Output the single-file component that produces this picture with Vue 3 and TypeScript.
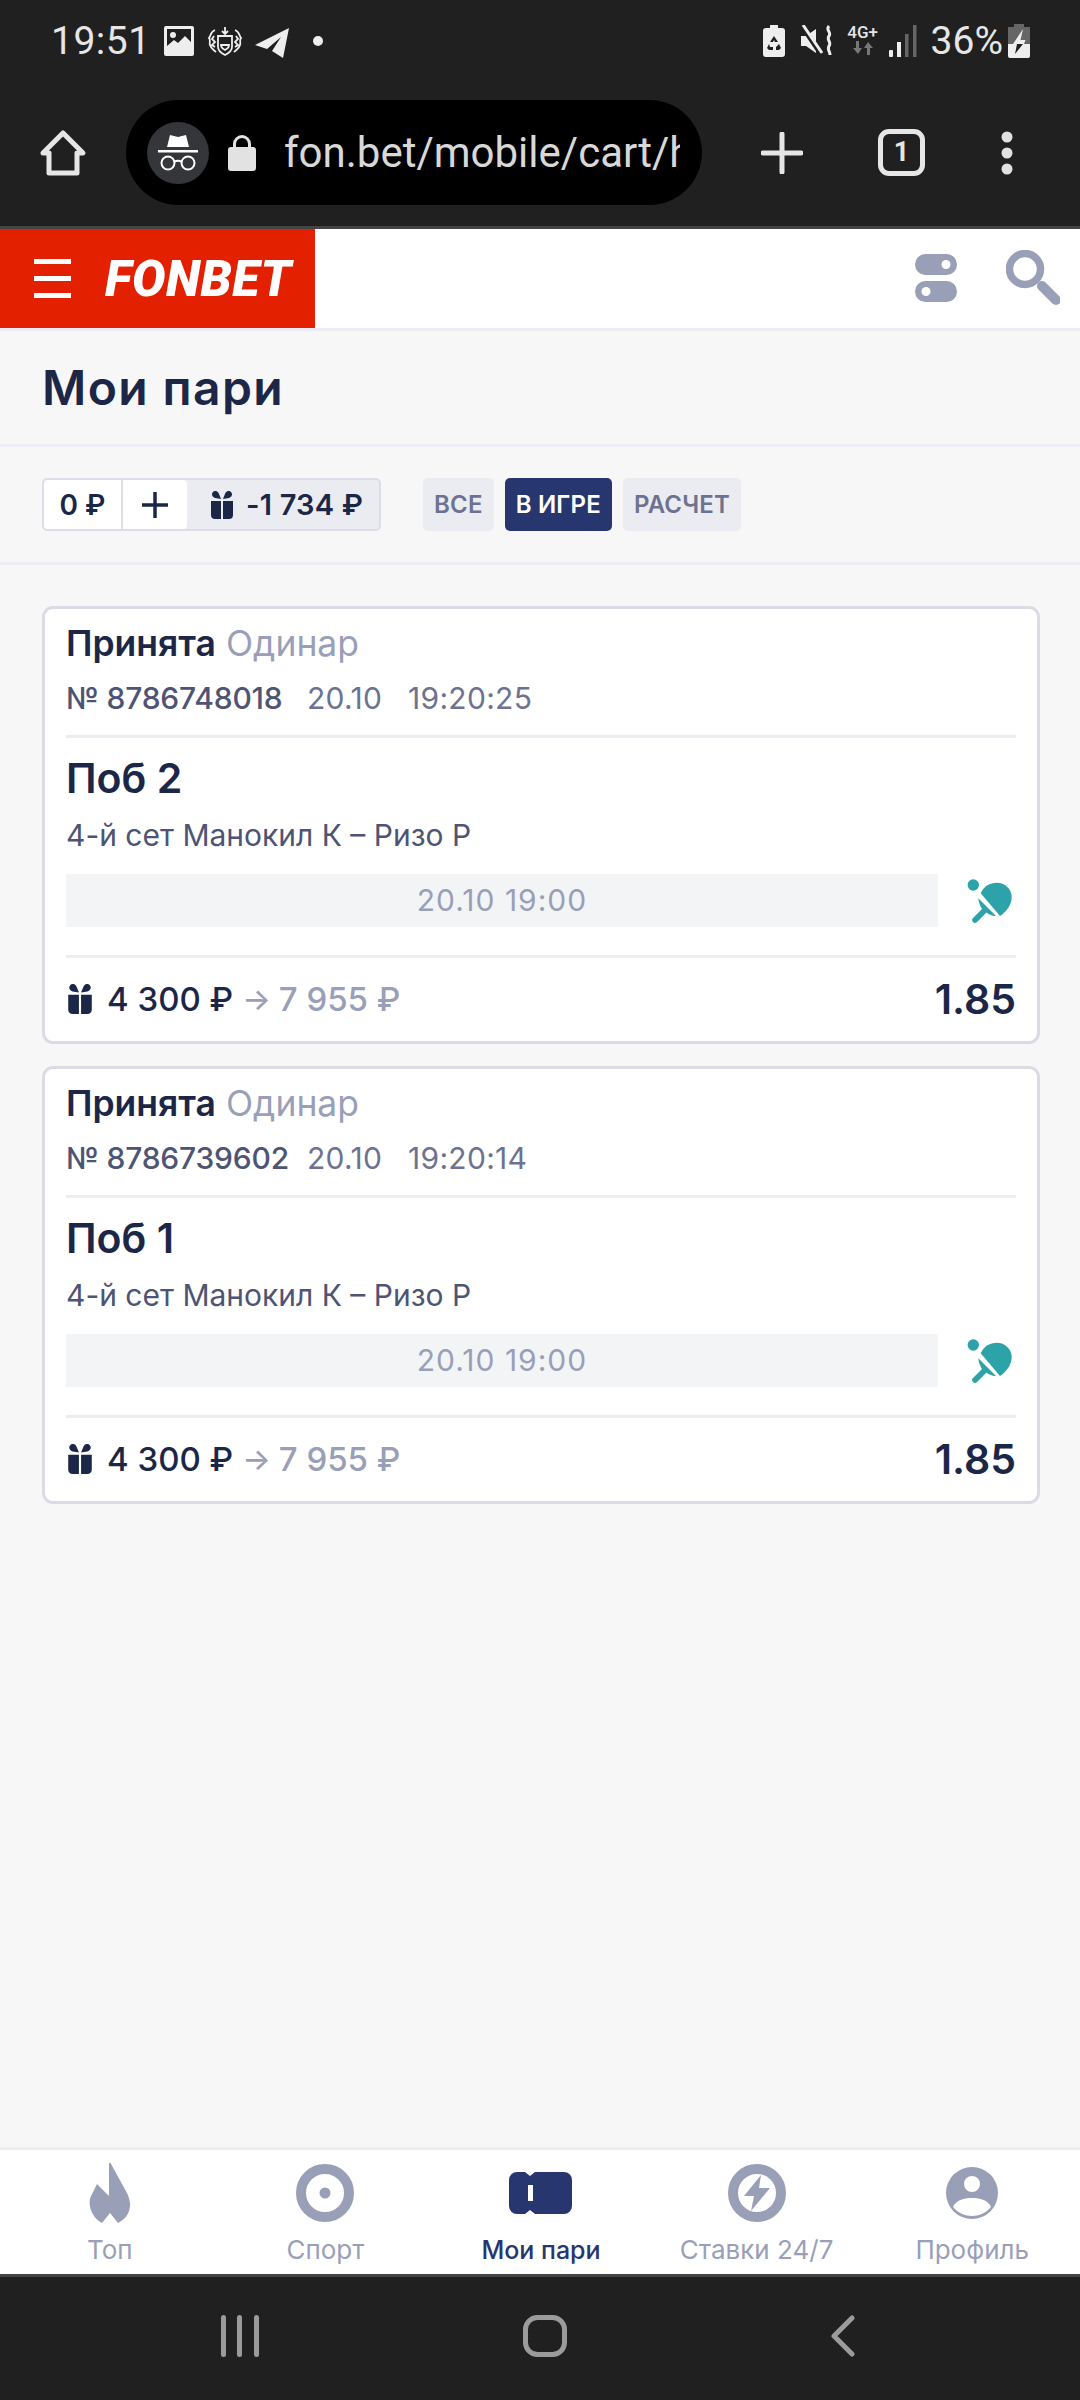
<template>
  <div class="screen">
    <div class="chrome">
      <div class="status">
        <span class="time">19:51</span>
        <svg class="st-img" viewBox="0 0 30 30"><path fill="#eee" fill-rule="evenodd" d="M2 0h26a2 2 0 0 1 2 2v26a2 2 0 0 1-2 2H2a2 2 0 0 1-2-2V2a2 2 0 0 1 2-2zM3 3v17l7-6 4 3 7-7 6 6V3zM9 6a3 3 0 1 1 0 6 3 3 0 0 1 0-6z" /></svg>
        <svg class="st-fon" viewBox="0 0 36 32" fill="none" stroke="#eee" stroke-width="1.8"><path d="M18 1v6M15 5l3 3 3-3M11 10h14v11c0 4-3 6-7 8-4-2-7-4-7-8zM14 19c0 3 2 4 4 5 2-1 4-2 4-5z" /><path d="M8 4C3 6 4 10 2 12c2 2 0 4 1 7 1 4 4 5 6 7M28 4c5 2 4 6 6 8-2 2 0 4-1 7-1 4-4 5-6 7M7 10l-2 3 3 3-3 3 3 2M29 10l2 3-3 3 3 3-3 2" /></svg>
        <svg class="st-tg" viewBox="0 0 34 32"><path fill="#eee" d="M34 1 28 31 17 24l9-14-14 12L0 18z" /></svg>
        <span class="st-dot"></span>
        <span class="status-gap"></span>
        <svg class="st-bat" viewBox="0 0 22 32"><path fill="#eee" fill-rule="evenodd" d="M7 0h8v3h4a3 3 0 0 1 3 3v23a3 3 0 0 1-3 3H3a3 3 0 0 1-3-3V6a3 3 0 0 1 3-3h4zM11 11l-4 6h3l1-2 1 2h3zM6 19l-2 4 2 2h4v-3H7zM16 19l-3 3v3h3l2-2z" /></svg>
        <svg class="st-mute" viewBox="0 0 32 32"><path fill="#eee" d="M0 11h5L15 4v24L5 21H0z" /><path d="M1 1l19 28" stroke="#202020" stroke-width="5" /><path d="M2 0l19 28" stroke="#eee" stroke-width="3" /><path d="M28 1c-4 4 3 6 0 10-3 4 3 6 0 10-2 4 1 5 1 9" fill="none" stroke="#eee" stroke-width="3" /></svg>
        <div class="st-net">
          <span>4G+</span>
          <svg viewBox="0 0 24 14"><path fill="#777" d="M5 0h3v7h3l-4 6-5-6h3zM17 1l5 6h-3v7h-3V7h-3z" /></svg>
        </div>
        <svg class="st-sig" viewBox="0 0 28 32"><rect y="25" width="4" height="7" rx="1" fill="#eee" /><rect x="8" y="17" width="4" height="15" fill="#eee" /><rect x="16" y="9" width="3.5" height="23" fill="#666" /><rect x="24" y="0" width="3.5" height="32" fill="#666" /></svg>
        <span class="pct">36%</span>
        <svg class="st-charge" viewBox="0 0 22 34">
          <path fill="#666" d="M6 0h10v3h6v17H0V3h6z" />
          <path fill="#eee" d="M0 20h22v12a2 2 0 0 1-2 2H2a2 2 0 0 1-2-2z" />
          <path fill="#eee" d="M15 5 5 20h11l1.500-4h-5z" />
          <path fill="#202020" d="M9 20 7 30l8-10z" />
        </svg>
      </div>
      <div class="toolbar">
        <svg class="home" viewBox="0 0 48 48" fill="none" stroke="#e6e6e6" stroke-width="5" stroke-linejoin="round"><path d="M4 24 24 4l20 20h-6v20H10V24z" /></svg>
        <div class="urlbar">
          <span class="incognito">
            <svg viewBox="0 0 42 38" fill="#fff"><path d="M10 13 13 1l8 2 8-2 3 12z" /><rect x="1" y="16" width="40" height="2.5" /><g fill="none" stroke="#fff" stroke-width="2"><circle cx="11" cy="29" r="6.5" /><circle cx="31" cy="29" r="6.5" /><path d="M17 28c2.500-1.500 5.500-1.500 8 0" /></g></svg>
          </span>
          <svg class="lock" viewBox="0 0 28 37"><path fill="#e2e2e2" fill-rule="evenodd" d="M5 13V10a9 9 0 0 1 18 0v3h2a3 3 0 0 1 3 3v18a3 3 0 0 1-3 3H3a3 3 0 0 1-3-3V16a3 3 0 0 1 3-3zM8 13h12V10a6 6 0 0 0-12 0z" /></svg>
          <span class="url">fon.bet/mobile/cart/history</span>
        </div>
        <svg class="plus" viewBox="0 0 42 42"><path d="M21 2v38M2 21h38" stroke="#e6e6e6" stroke-width="5" stroke-linecap="round" /></svg>
        <span class="tabcount">1</span>
        <svg class="dots" viewBox="0 0 12 44" fill="#e2e2e2"><circle cx="6" cy="6" r="5.500" /><circle cx="6" cy="22" r="5.500" /><circle cx="6" cy="38" r="5.500" /></svg>
      </div>
    </div>

    <header class="top">
      <div class="brand">
        <div class="burger"><i></i><i></i><i></i></div>
        <span class="logo">FONBET</span>
      </div>
      <svg class="toggles" viewBox="0 0 42 48">
        <rect width="42" height="21" rx="10.500" fill="#9a9fb8" />
        <circle cx="31" cy="10.500" r="4.500" fill="#fff" />
        <rect y="27" width="42" height="21" rx="10.500" fill="#9a9fb8" />
        <circle cx="11" cy="37.500" r="4.500" fill="#fff" />
      </svg>
      <svg class="search" viewBox="0 0 54 56" fill="none" stroke="#9a9fb8"><circle cx="19" cy="19" r="15.500" stroke-width="7.500" /><path d="M36 36l14 14" stroke-width="10" stroke-linecap="round" /></svg>
    </header>

    <main class="content">
      <h1 class="title">Мои пари</h1>
      <div class="filters">
        <div class="balance">
          <div class="bal-white">
            <span class="bal-sum">0 ₽</span>
            <span class="bal-add">
              <svg viewBox="0 0 26 26"><path d="M13 0v26M0 13h26" stroke="#1c2647" stroke-width="3.500" /></svg>
            </span>
          </div>
          <div class="bal-bonus">
            <svg class="gift" viewBox="0 0 26 28"><use href="#gift-shape" /></svg>
            <span>-1 734 ₽</span>
          </div>
        </div>
        <button
          v-for="f in filters"
          :key="f"
          :class="['chip', { active: f === 'В ИГРЕ' }]"
        >{{ f }}</button>
      </div>

      <section class="bets">
        <article v-for="bet in bets" :key="bet.id" class="bet">
          <div class="bet-head">
            <div class="bet-state"><b>Принята</b> <span>Одинар</span></div>
            <div class="bet-meta">
              <span class="num">№ {{ bet.id }}</span>
              <span class="date">20.10</span>
              <span>{{ bet.time }}</span>
            </div>
          </div>
          <div class="bet-body">
            <div class="bet-pick">{{ bet.pick }}</div>
            <div class="bet-event">4-й сет Манокил К – Ризо Р</div>
            <div class="bet-when">
              <div class="when-bar">20.10 19:00</div>
              <svg class="paddle" viewBox="0 0 50 50" fill="#2ba3a8">
                <circle cx="11.300" cy="9" r="5.700" />
                <path d="M18.700 17.300C22 10 28 6.700 34.700 6.700 43 6.700 49.700 13 49.700 21 49.700 28 45 35.500 38 40z" />
                <path d="M16.300 22.300 34 40C30 40 26 38 24.500 36.500L15 46Q13 48 11 46 9 44 11 42L20 33C18 30 16.500 26 16.300 22.300z" />
              </svg>
            </div>
          </div>
          <div class="bet-foot">
            <svg class="gift small" viewBox="0 0 26 28"><use href="#gift-shape" /></svg>
            <span class="stake">4 300 ₽</span>
            <span class="arrow">→</span>
            <span class="win">7 955 ₽</span>
            <span class="coef">1.85</span>
          </div>
        </article>
      </section>
    </main>

    <nav class="tabbar">
      <div v-for="t in tabs" :key="t.key" :class="['tab', { current: t.key === 'bets' }]">
        <span class="tab-icon">
          <svg v-if="t.key === 'top'" width="42" height="61" viewBox="0 0 42 61" fill="#9a9fb8"><path d="M20 0h1.500L38 30c6 12 3 24-9 30l-8-10-8 10C3 55-2 42 2 33l6-12 12 12z" /></svg>
          <svg v-else-if="t.key === 'sport'" width="58" height="58" viewBox="0 0 58 58"><circle cx="29" cy="29" r="24" fill="none" stroke="#9a9fb8" stroke-width="10" /><circle cx="29" cy="29" r="5.500" fill="#9a9fb8" /></svg>
          <svg v-else-if="t.key === 'bets'" width="63" height="42" viewBox="0 0 63 42"><path fill="#27366f" fill-rule="evenodd" d="M8 0h8l5 4 5-4h29a8 8 0 0 1 8 8v26a8 8 0 0 1-8 8H26l-5-4-5 4H8a8 8 0 0 1-8-8V8a8 8 0 0 1 8-8zM19 13v16h5V13z" /></svg>
          <svg v-else-if="t.key === 'live'" width="58" height="58" viewBox="0 0 58 58"><circle cx="29" cy="29" r="24" fill="none" stroke="#9a9fb8" stroke-width="10" /><path fill="#9a9fb8" d="M33 11 16 32h10l-3 15 19-23H31z" /></svg>
          <svg v-else width="54" height="54" viewBox="0 0 54 54"><circle cx="27" cy="27" r="26" fill="#9a9fb8" /><circle cx="27" cy="18" r="8" fill="#fff" /><path fill="#fff" d="M8 41c3-7 11-9 19-9s16 2 19 9c-5 6-12 9-19 9S13 47 8 41z" /></svg>
        </span>
        <span class="tab-label">{{ t.label }}</span>
      </div>
    </nav>

    <div class="sysnav">
      <svg width="38" height="42" viewBox="0 0 38 42" fill="#9b9b9b"><rect x="0" width="5" height="42" rx="2.500" /><rect x="16" width="5" height="42" rx="2.500" /><rect x="33" width="5" height="42" rx="2.500" /></svg>
      <svg width="44" height="42" viewBox="0 0 44 42" fill="none" stroke="#9b9b9b" stroke-width="5"><rect x="2.500" y="2.500" width="39" height="37" rx="12" /></svg>
      <svg width="26" height="42" viewBox="0 0 26 42" fill="none" stroke="#9b9b9b" stroke-width="5" stroke-linecap="round" stroke-linejoin="round"><path d="M22 3 4 21l18 18" /></svg>
    </div>

    <svg class="defs" width="0" height="0">
      <defs>
        <g id="gift-shape" fill="#1c2647">
          <path d="M2 10h10v18H6a4 4 0 0 1-4-4zM14 10h10v14a4 4 0 0 1-4 4h-6z" />
          <path d="M12 8 6 7C3 6 2 3 4 1s5-1 6 2zM14 8l6-1c3-1 4-4 2-6s-5-1-6 2z" />
        </g>
      </defs>
    </svg>
  </div>
</template>

<script setup lang="ts">
const filters = ['ВСЕ', 'В ИГРЕ', 'РАСЧЕТ'];

const bets = [
  { id: '8786748018', time: '19:20:25', pick: 'Поб 2' },
  { id: '8786739602', time: '19:20:14', pick: 'Поб 1' }
];

const tabs = [
  { key: 'top', label: 'Топ' },
  { key: 'sport', label: 'Спорт' },
  { key: 'bets', label: 'Мои пари' },
  { key: 'live', label: 'Ставки 24/7' },
  { key: 'profile', label: 'Профиль' }
];
</script>

<style>
html, body {
  margin: 0;
  background: #f7f7f8;
}
</style>

<style scoped>
.screen {
  width: 1080px;
  height: 2400px;
  display: flex;
  flex-direction: column;
  font-family: Inter, "Noto Sans", sans-serif;
  color: #1c2647;
  background: #f7f7f8;
  overflow: hidden;
}

.chrome {
  height: 229px;
  box-sizing: border-box;
  flex: none;
  background: #202020;
  border-bottom: 3px solid #444;
  font-family: Roboto, sans-serif;
  color: #e6e6e6;
}

.status {
  height: 100px;
  box-sizing: border-box;
  padding: 24px 50px 0 51px;
  display: flex;
  align-items: flex-start;
}

.time {
  font-size: 39px;
  line-height: 34px;
  width: 113px;
  letter-spacing: 0.5px;
}

.st-img { width: 30px; height: 30px; margin-top: 2px; margin-right: 13px; }
.st-fon { width: 36px; height: 32px; margin-top: 2px; margin-right: 12px; }
.st-tg { width: 34px; height: 32px; margin-top: 3px; margin-right: 24px; }
.st-dot { width: 10px; height: 10px; border-radius: 50%; background: #eee; margin-top: 12px; }
.status-gap { flex: 1; }
.st-bat { width: 22px; height: 32px; margin-top: 1px; margin-right: 16px; }
.st-mute { width: 32px; height: 32px; margin-top: 1px; margin-right: 14px; }
.st-net { width: 32px; margin-right: 10px; display: flex; flex-direction: column; align-items: center; }
.st-net span { font-size: 17px; line-height: 17px; font-weight: 500; white-space: nowrap; }
.st-net svg { width: 24px; height: 14px; }
.st-sig { width: 28px; height: 32px; margin-top: 1px; margin-right: 14px; }
.pct { font-size: 39px; line-height: 34px; margin-right: 5px; }
.st-charge { width: 22px; height: 34px; }

.toolbar {
  height: 105px;
  display: flex;
  align-items: center;
}

.home { width: 48px; height: 48px; margin-left: 39px; margin-right: 39px; }

.urlbar {
  width: 576px;
  height: 105px;
  box-sizing: border-box;
  padding: 0 22px 0 21px;
  background: #000;
  border-radius: 53px;
  display: flex;
  align-items: center;
  overflow: hidden;
}

.incognito {
  flex: none;
  width: 62px;
  height: 62px;
  border-radius: 50%;
  background: #35363a;
  display: flex;
  align-items: center;
  justify-content: center;
}

.incognito svg { width: 42px; height: 38px; }
.lock { flex: none; width: 28px; height: 37px; margin-left: 19px; }

.url {
  margin-left: 28px;
  font-size: 42px;
  color: #d8d8d8;
  white-space: nowrap;
  overflow: hidden;
}

.plus { width: 42px; height: 42px; margin-left: 59px; }

.tabcount {
  width: 47px;
  height: 47px;
  box-sizing: border-box;
  margin-left: 75px;
  border: 5px solid #e6e6e6;
  border-radius: 11px;
  font-size: 27px;
  font-weight: 700;
  line-height: 37px;
  text-align: center;
}

.dots { width: 12px; height: 44px; margin-left: 76px; }

.top {
  height: 102px;
  box-sizing: border-box;
  flex: none;
  background: #fff;
  border-bottom: 3px solid #ecedf2;
  display: flex;
  align-items: flex-start;
}

.brand {
  width: 315px;
  height: 99px;
  box-sizing: border-box;
  padding-left: 34px;
  background: #e32000;
  display: flex;
  align-items: center;
  gap: 34px;
  margin-right: 600px;
}

.burger { width: 37px; display: flex; flex-direction: column; gap: 12px; }
.burger i { display: block; height: 5px; background: #fff; }

.logo {
  font-family: Roboto, sans-serif;
  font-size: 50px;
  font-weight: 900;
  font-style: italic;
  color: #fff;
  line-height: 1;
  letter-spacing: 0.5px;
}

.toggles { width: 42px; height: 48px; margin-top: 25px; }
.search { width: 54px; height: 56px; margin-top: 21px; margin-left: 49px; }

.content {
  flex: 1;
  min-height: 0;
}

.title {
  margin: 0;
  height: 116px;
  box-sizing: border-box;
  border-bottom: 3px solid #ecedf2;
  padding: 0 42px;
  display: flex;
  align-items: center;
  font-size: 48px;
  font-weight: 600;
  letter-spacing: 1.4px;
}

.filters {
  height: 118px;
  box-sizing: border-box;
  border-bottom: 3px solid #ecedf2;
  padding: 31px 42px 0;
  display: flex;
  align-items: flex-start;
  gap: 11px;
}

.balance {
  width: 339px;
  height: 53px;
  box-sizing: border-box;
  margin-right: 31px;
  background: #ebecf2;
  border: 2px solid #dcdde6;
  border-radius: 5px;
  display: flex;
  font-size: 28px;
  font-weight: 600;
}

.bal-white {
  width: 143px;
  background: #fff;
  border-radius: 4px;
  display: flex;
}

.bal-sum {
  width: 77px;
  border-right: 2px solid #dcdde6;
  display: flex;
  align-items: center;
  justify-content: center;
}

.bal-add {
  flex: 1;
  display: flex;
  align-items: center;
  justify-content: center;
}

.bal-add svg { width: 26px; height: 26px; }

.bal-bonus {
  flex: 1;
  padding-left: 22px;
  display: flex;
  align-items: center;
  gap: 11px;
  font-size: 29px;
  letter-spacing: 0.2px;
  white-space: nowrap;
}

.gift { width: 26px; height: 28px; flex: none; }

.chip {
  height: 53px;
  padding: 0 11px;
  border: 0;
  border-radius: 5px;
  background: #ebecf2;
  color: #6d7290;
  font-family: inherit;
  font-size: 24px;
  font-weight: 600;
  letter-spacing: 0.2px;
}

.chip.active {
  background: #27366f;
  color: #fff;
}

.bets {
  padding: 41px 40px 0 42px;
  display: flex;
  flex-direction: column;
  gap: 22px;
}

.bet {
  height: 438px;
  box-sizing: border-box;
  background: #fff;
  border: 3px solid #dadbe4;
  border-radius: 11px;
  padding: 0 21px;
}

.bet-head {
  height: 129px;
  box-sizing: border-box;
  border-bottom: 3px solid #ecedf2;
  padding-top: 14px;
}

.bet-state {
  font-size: 35.5px;
  line-height: 42px;
}

.bet-state b { font-weight: 600; }
.bet-state span { color: #9a9fb8; }

.bet-meta {
  margin-top: 13px;
  font-size: 30px;
  line-height: 40px;
  letter-spacing: 0.3px;
  color: #6d7290;
  display: flex;
  gap: 22px;
}

.bet-meta .num {
  width: 219px;
  flex: none;
  color: #4d5474;
  font-weight: 500;
  white-space: nowrap;
  letter-spacing: -0.2px;
}

.bet-meta .date { width: 79px; flex: none; }

.bet-body {
  height: 220px;
  box-sizing: border-box;
  border-bottom: 3px solid #ecedf2;
  padding-top: 17px;
}

.bet-pick {
  font-size: 41px;
  line-height: 46px;
  font-weight: 600;
}

.bet-event {
  margin-top: 16px;
  font-size: 30px;
  line-height: 36px;
  color: #4d5474;
}

.bet-when {
  margin-top: 21px;
  display: flex;
  align-items: center;
  justify-content: space-between;
  padding-right: 4px;
}

.when-bar {
  width: 872px;
  height: 53px;
  background: #f3f4f6;
  color: #9a9fb8;
  font-size: 30px;
  letter-spacing: 1px;
  line-height: 53px;
  text-align: center;
}

.paddle { width: 50px; height: 50px; }

.bet-foot {
  height: 81px;
  padding-bottom: 2px;
  display: flex;
  align-items: center;
  font-size: 33px;
  font-weight: 500;
}

.gift.small { width: 28px; height: 30px; margin-right: 13px; }

.arrow, .win { color: #9a9fb8; }
.arrow { margin: 0 8px 0 9px; font-size: 30px; }
.stake { font-weight: 500; }

.coef {
  margin-left: auto;
  font-size: 41px;
  font-weight: 600;
}

.tabbar {
  height: 127px;
  box-sizing: border-box;
  flex: none;
  background: #fff;
  border-top: 3px solid #ecedf2;
  display: grid;
  grid-template-columns: repeat(5, 1fr);
  padding-left: 2px;
}

.tab {
  display: flex;
  flex-direction: column;
  align-items: center;
}

.tab-icon {
  height: 72px;
  margin-top: 7px;
  display: flex;
  align-items: center;
  justify-content: center;
}

.tab-label {
  margin-top: 6px;
  font-size: 26px;
  line-height: 30px;
  color: #9a9fb8;
  white-space: nowrap;
}

.tab.current .tab-label {
  color: #27366f;
  font-size: 25px;
  font-weight: 500;
}

.sysnav {
  height: 126px;
  box-sizing: border-box;
  flex: none;
  background: #202020;
  border-top: 3px solid #444;
  padding: 38px 224px 0 221px;
  display: flex;
  align-items: flex-start;
  justify-content: space-between;
}

.defs {
  position: absolute;
}
</style>
